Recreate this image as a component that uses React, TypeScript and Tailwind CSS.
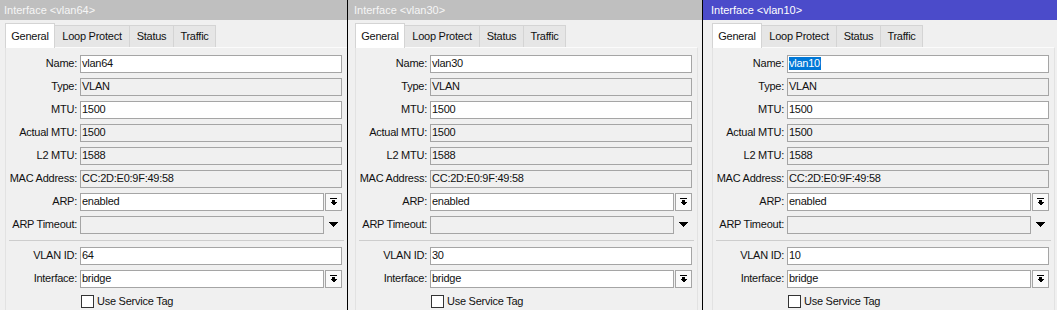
import React from 'react';

function DropArrow() {
    return (
        <svg width="7" height="8" viewBox="0 0 7 8" shapeRendering="crispEdges">
            <rect x="0" y="0" width="7" height="1" fill="#000" />
            <rect x="2" y="2" width="3" height="2" fill="#000" />
            <polygon points="0,4 7,4 3.5,7.5" fill="#000" />
        </svg>
    );
}

function Field({ value, editable, wide = true, selected }: { value?: string; editable?: boolean; wide?: boolean; selected?: boolean }) {
    return (
        <div className={`h-[18px] border border-[#a5a5a5] flex items-center pl-[1px] overflow-hidden whitespace-nowrap ${wide ? 'w-[262px]' : 'w-[244px]'} ${editable ? 'bg-white' : 'bg-[#f0f0f0]'}`}>
            {selected ? <span className="bg-[#0078d7] text-white leading-[13px] pr-[1px]">{value}</span> : <span>{value}</span>}
        </div>
    );
}

function DropButton() {
    return (
        <div className="ml-px w-[17px] h-[18px] border border-[#a5a5a5] bg-[#fafafa] flex items-center justify-center">
            <DropArrow />
        </div>
    );
}

function Row({ label, children }: { label: string; children: React.ReactNode }) {
    return (
        <div className="flex h-[23px] items-center">
            <div className="w-[71px] text-right whitespace-nowrap">{label}:</div>
            <div className="ml-[3px] flex items-center">{children}</div>
        </div>
    );
}

function Window({ name, vlan, active, shift, width, border }: { name: string; vlan: string; active?: boolean; shift: string; width: string; border?: boolean }) {
    return (
        <div className={`h-[310px] flex flex-col overflow-hidden bg-[#f0f0f0] shrink-0 ${width} ${border ? 'border-r border-black' : ''}`}>
            <div className={`h-[20px] shrink-0 flex items-center whitespace-nowrap tracking-normal ${active ? 'bg-[#4b4bca] text-white' : 'bg-[#bfbfbf] text-[#f6f6f6]'}`}>
                <span className={`pl-[4px] ${shift}`}>Interface &lt;{name}&gt;</span>
            </div>
            <div className={`flex-1 ${shift}`}>
                <div className="pl-[5px] pt-[2px] w-[350px]">
                    <div className="flex items-end h-[25px] text-[#111]">
                        <div className="w-[50px] h-[25px] bg-white border border-b-0 border-[#d4d4d4] flex items-center justify-center -mb-px relative z-10">General</div>
                        <div className="w-[75px] h-[22px] bg-[#e6e6e6] border border-l-0 border-b-0 border-[#d4d4d4] flex items-center justify-center">Loop Protect</div>
                        <div className="w-[44px] h-[22px] bg-[#e6e6e6] border border-l-0 border-b-0 border-[#d4d4d4] flex items-center justify-center">Status</div>
                        <div className="w-[42px] h-[22px] bg-[#e6e6e6] border border-l-0 border-b-0 border-[#d4d4d4] flex items-center justify-center">Traffic</div>
                    </div>
                    <div className="w-[343px] h-[270px] border border-b-0 border-[#e2e2e2] border-t-[#fbfbfb] pt-[4px] text-[#111]">
                        <Row label="Name"><Field value={name} editable selected={active} /></Row>
                        <Row label="Type"><Field value="VLAN" /></Row>
                        <Row label="MTU"><Field value="1500" editable /></Row>
                        <Row label="Actual MTU"><Field value="1500" /></Row>
                        <Row label="L2 MTU"><Field value="1588" /></Row>
                        <Row label="MAC Address"><Field value="CC:2D:E0:9F:49:58" /></Row>
                        <Row label="ARP">
                            <Field value="enabled" editable wide={false} />
                            <DropButton />
                        </Row>
                        <Row label="ARP Timeout">
                            <Field wide={false} />
                            <div className="w-[18px] flex justify-center">
                                <svg width="9" height="5" viewBox="0 0 9 5" shapeRendering="crispEdges">
                                    <polygon points="0,0 9,0 4.5,5" fill="#000" />
                                </svg>
                            </div>
                        </Row>
                        <div className="h-[8px] flex items-center pl-[3px] pr-[3px]">
                            <div className="h-px w-full bg-[#cdcdcd]" />
                        </div>
                        <Row label="VLAN ID"><Field value={vlan} editable /></Row>
                        <Row label="Interface">
                            <Field value="bridge" editable wide={false} />
                            <DropButton />
                        </Row>
                        <div className="flex h-[23px] items-center pl-[75px]">
                            <div className="w-[13px] h-[13px] border border-[#333] bg-white" />
                            <span className="ml-[3px]">Use Service Tag</span>
                        </div>
                    </div>
                </div>
            </div>
        </div>
    );
}

export default function App() {
    return (
        <div className="flex w-[1057px] h-[310px] overflow-hidden bg-[#f0f0f0] font-['Liberation_Sans',Arial,sans-serif] text-[11px] leading-none tracking-[-0.25px]">
            <Window name="vlan64" vlan="64" shift="ml-0" width="w-[348px]" border />
            <Window name="vlan30" vlan="30" shift="ml-[2px]" width="w-[355px]" border />
            <Window name="vlan10" vlan="10" shift="ml-[4px]" width="w-[354px]" active />
        </div>
    );
}
